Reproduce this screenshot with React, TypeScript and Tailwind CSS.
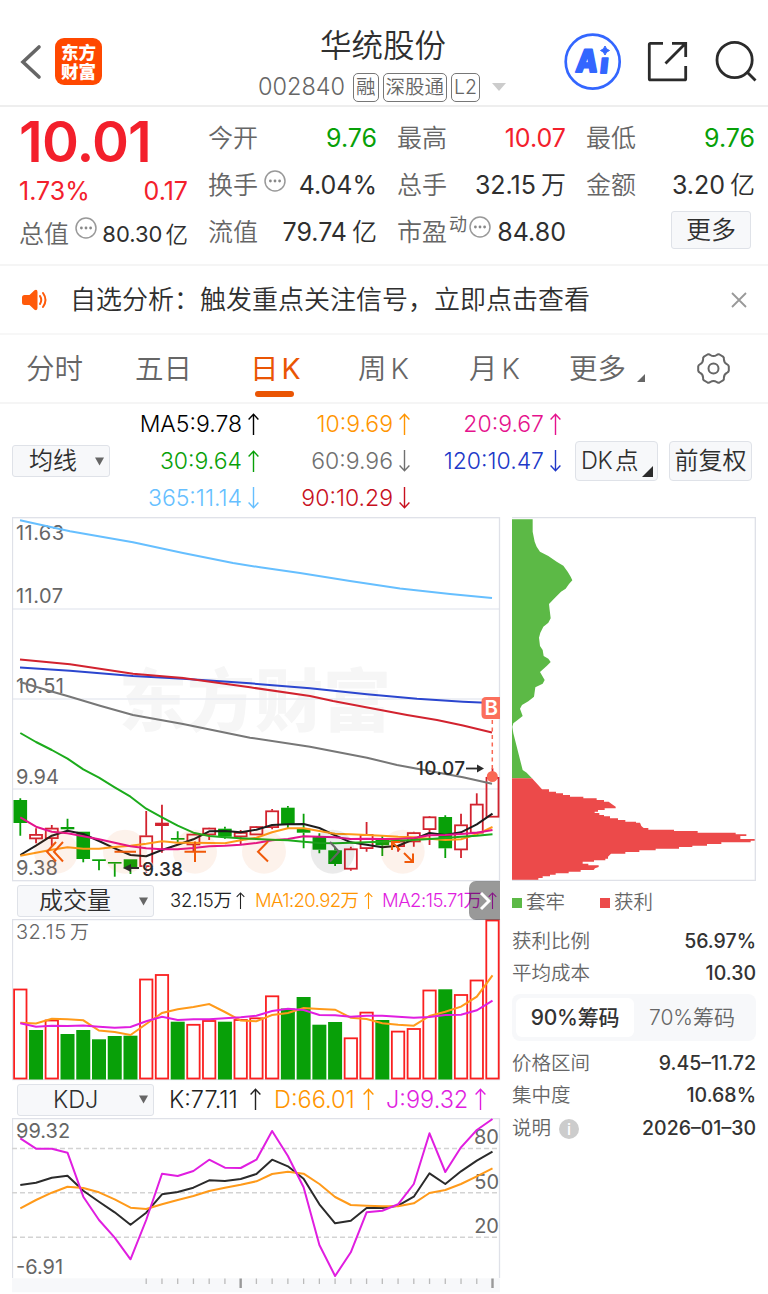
import type { ReactNode } from 'react';

// Horizontal position of the n-th trading day, shared by all three charts
const dayX = (i: number) => 20.3 + i * 15.74;

const toPoints = (ys: number[], scale = 1) =>
  ys.map((y, i) => `${dayX(i).toFixed(1)},${(y * scale).toFixed(1)}`).join(' ');

type Candle = [up: number, high: number, top: number, bottom: number, low: number];

const candles: Candle[] = [
  [0, 798.3, 800, 823, 835.7],
  [1, 828.3, 834.3, 839, 843.3],
  [1, 825, 828, 838.7, 846],
  [0, 818.7, 827, 829.3, 831.7],
  [0, 831.7, 831.7, 859, 862.3],
  [0, 859.3, 859.3, 861, 870.3],
  [0, 862, 862, 863.4, 876.7],
  [0, 859.3, 859.3, 868.3, 874],
  [1, 811, 835.7, 866.7, 873],
  [1, 804.7, 823, 825.7, 852.7],
  [0, 831.3, 838, 839.7, 842],
  [1, 834, 834, 845, 851],
  [1, 827.7, 828, 835, 840],
  [0, 826.7, 828.7, 836.7, 838.7],
  [1, 830, 832.3, 837, 844.7],
  [1, 826, 826.5, 835, 835],
  [1, 809, 810.7, 827.7, 829.3],
  [0, 806, 807.7, 824, 828.3],
  [0, 813.7, 828.7, 832.7, 848.3],
  [0, 833.3, 836.7, 849.7, 853.3],
  [0, 846.7, 850.3, 864, 866],
  [1, 846.7, 848.7, 869.3, 870.7],
  [1, 822, 834.3, 848.7, 851.7],
  [0, 836, 838, 845.3, 856],
  [1, 840, 841, 846.7, 851.7],
  [1, 831.7, 832.5, 842, 846.7],
  [1, 816, 816.7, 829.7, 845],
  [0, 815.3, 817, 848.3, 858],
  [1, 813.7, 824.7, 850, 858],
  [1, 793.3, 804, 833.3, 833.3],
  [1, 768.3, 777.3, 817.3, 817.3],
];

const ma5 = [855, 845.7, 835.7, 830.7, 834, 841, 848.3, 855, 856.3, 850, 844.7, 839.3, 831.3, 831, 832.3, 829.7, 825, 824.3, 824, 828, 835.3, 842.3, 844.7, 847.3, 845.7, 839.3, 833, 835, 832.3, 824.3, 813.7];
const ma10 = [855.7, 852.7, 849.7, 847.3, 848.7, 848.7, 847, 845.7, 843.7, 841.3, 842.7, 842.7, 843, 843.3, 840.3, 837.7, 832.3, 828.3, 828.3, 831, 833.7, 834.3, 835, 835.7, 836.7, 837.3, 838.7, 840, 839.3, 834.3, 827];
const ma20 = [817.3, 826.7, 831.7, 833.3, 836.3, 839.3, 842.7, 846.3, 848.3, 849.3, 849.3, 848, 846.3, 845.7, 844.7, 843, 840.3, 839, 836.3, 836.7, 837.3, 839, 838.7, 839, 839, 838, 835.3, 835, 834, 832.7, 830];
const ma30 = [733, 742, 750, 758.7, 769.3, 777.7, 787.3, 796.7, 808.7, 817.3, 825.7, 832.7, 836, 837.3, 838.3, 839, 839.7, 840.3, 841.7, 843, 843.3, 842.7, 842.3, 841.7, 840.7, 840, 839, 838, 836.7, 835.7, 834.3];

const volumes: [up: number, top: number][] = [
  [1, 989.5], [0, 1030], [1, 1020.5], [0, 1034], [0, 1030], [0, 1039.3], [0, 1036], [0, 1035.7],
  [1, 979.5], [1, 975], [0, 1021.7], [1, 1024.8], [1, 1021], [0, 1021.7], [1, 1020], [1, 1018.3],
  [1, 996.3], [0, 1008.5], [0, 997], [0, 1024.7], [0, 1022], [1, 1038.3], [1, 1012.6], [0, 1020],
  [1, 1031.6], [1, 1029], [1, 990.5], [0, 989.3], [1, 995], [1, 980.5], [1, 920.5],
];
const volMa1 = [1022.7, 1023.5, 1018.7, 1019.2, 1020.3, 1030.5, 1032, 1035, 1024, 1013, 1009.3, 1007, 1004, 1012, 1020.5, 1021.3, 1015, 1013, 1008, 1009, 1009.7, 1017.7, 1019, 1023.3, 1024.7, 1025.7, 1016, 1011.7, 1006.7, 996.7, 975.3];
const volMa2 = [1023.3, 1026.7, 1025.7, 1026, 1025.5, 1026.7, 1027.7, 1027, 1021.3, 1016.7, 1020, 1019.3, 1019.3, 1018.3, 1017.3, 1015.7, 1011, 1008.7, 1010, 1015, 1015.3, 1016.7, 1015.7, 1015.7, 1016.7, 1017.7, 1017, 1015, 1014.7, 1010.3, 1000.7];

const kLine = [315, 308, 293, 287, 332, 365, 397, 434, 398, 343, 336, 323, 301, 303, 297, 282, 239, 259, 296, 373, 430, 422, 384, 384, 377, 350, 280, 312, 274, 242, 215];
const dLine = [385, 360, 338, 320, 324, 337, 358, 383, 387, 373, 360, 348, 333, 323, 314, 304, 282, 275, 281, 312, 351, 375, 377, 379, 379, 370, 339, 330, 312, 289, 265];
const jLine = [175, 206, 206, 218, 350, 420, 473, 538, 420, 281, 288, 273, 239, 263, 264, 239, 153, 228, 322, 495, 588, 517, 397, 392, 373, 312, 160, 276, 202, 150, 117];

const Dots = () => (
  <svg className="w-[22px] h-[22px] shrink-0" viewBox="0 0 22 22">
    <circle cx="11" cy="11" r="10" fill="none" stroke="#999" strokeWidth="1.5" />
    <circle cx="6.4" cy="11" r="1.4" fill="#888" />
    <circle cx="11" cy="11" r="1.4" fill="#888" />
    <circle cx="15.6" cy="11" r="1.4" fill="#888" />
  </svg>
);

const Arrow = ({ down = false, small = false }: { down?: boolean; small?: boolean }) => (
  <svg
    className={`${small ? 'w-[9px] h-[17px] mb-px' : 'w-[11px] h-[22px] mb-[2px]'} shrink-0 ${down ? 'rotate-180' : ''}`}
    viewBox="0 0 11 22"
    fill="none"
    stroke="currentColor"
    strokeWidth="1.4"
  >
    <path d="M5.5 22V1.2M0.6 6.4L5.5 1.2L10.4 6.4" />
  </svg>
);

const Caret = () => (
  <svg className="w-[9px] h-[9px]" viewBox="0 0 9 9">
    <path d="M0 0.5H9L4.5 8.5Z" fill="#666" />
  </svg>
);

const Corner = ({ className }: { className: string }) => (
  <svg className={className} viewBox="0 0 10 10">
    <path d="M10 0V10H0Z" fill="currentColor" />
  </svg>
);

const Tag = ({ children }: { children: ReactNode }) => (
  <span className="h-[29px] px-[2px] pt-px flex items-center border-[1.5px] border-[#777] rounded-[5px] text-[19.5px] font-[350] text-[#666]">
    {children}
  </span>
);

type StatProps = { label: ReactNode; value: string; unit?: string; color?: string; icon?: ReactNode };

const Stat = ({ label, value, unit, color = 'text-[#2f2f2f]', icon }: StatProps) => (
  <div className="h-[47px] flex items-center text-[25px]">
    <span className="text-[#666] font-[350]">{label}</span>
    {icon}
    <span className={`ml-auto ${color}`}>{value}</span>
    {unit && <span className={`ml-[5px] font-[350] ${color}`}>{unit}</span>}
  </div>
);

const Legend = ({ text, color, down }: { text: string; color: string; down?: boolean }) => (
  <div className={`h-[37px] flex items-center justify-end gap-[6px] ${color}`}>
    <span>{text}</span>
    <Arrow down={down} />
  </div>
);

const Row = ({ label, value, icon }: { label: string; value: string; icon?: ReactNode }) => (
  <div className="h-8 flex items-center text-[19.5px]">
    <span className="text-[#666] font-[350]">{label}</span>
    {icon}
    <span className="ml-auto text-[#333] font-medium">{value}</span>
  </div>
);

const Header = () => (
  <header className="h-[107px] border-b-2 border-[#eee] flex">
    <div className="w-[258px] flex items-start pt-[38px] pl-[20px]">
      <svg className="w-[22px] h-[48px] mr-[13px]" viewBox="0 0 22 48" fill="none">
        <path d="M19 9L3 24L19 39" stroke="#666" strokeWidth="3.6" strokeLinecap="round" />
      </svg>
      <div className="w-[47px] h-[47px] rounded-[9px] bg-[#ff4800] text-white text-[17.5px] font-black leading-[19px] flex flex-col items-center justify-center">
        <span>东方</span>
        <span>财富</span>
      </div>
    </div>
    <div className="w-[250px] pt-[26px]">
      <h1 className="h-10 flex items-center pl-[62px] text-[31.5px] text-[#2f2f2f] font-[350]">华统股份</h1>
      <div className="h-[42px] flex items-center gap-1">
        <span className="w-[91px] text-[23.5px] text-[#666] font-[350]">002840</span>
        <Tag>融</Tag>
        <Tag>深股通</Tag>
        <Tag>L2</Tag>
        <svg className="ml-2 w-[14px] h-[8px]" viewBox="0 0 14 8">
          <path d="M0 0H14L7 8Z" fill="#ccc" />
        </svg>
      </div>
    </div>
    <svg className="w-[260px] h-[104px]" viewBox="508 0 260 104" fill="none">
      <circle cx="592.7" cy="61.7" r="27" stroke="#3366ff" strokeWidth="2.7" />
      <g fill="#3366ff" stroke="#3366ff" strokeWidth="1.8" strokeLinejoin="round" className="font-black" fontSize="31">
        <text transform="translate(575 71.5) skewX(-6)" textLength="22" lengthAdjust="spacingAndGlyphs">A</text>
        <text transform="translate(599.5 72.500) skewX(-6)" fontSize="27">ı</text>
      </g>
      <path d="M605 46Q606 49.5 609.500 50.500Q606 51.500 605 55Q604 51.500 600.500 50.500Q604 49.500 605 46Z" fill="#3366ff" stroke="#3366ff" />
      <g stroke="#2b2b2b" strokeWidth="2.800">
        <path d="M663 43.300H650.500Q649.300 43.300 649.300 44.500V78.700Q649.300 79.900 650.500 79.900H684.500Q685.700 79.900 685.700 78.700V66" />
        <path d="M672 43.300H685.700V57M685.400 43.600L665.500 63.500" />
        <circle cx="734.600" cy="60" r="17.600" />
        <path d="M746.500 71.500L755.500 80.500" />
      </g>
    </svg>
  </header>
);

const Quote = () => (
  <section className="h-[159px] border-b-2 border-[#f5f5f5] pl-[19px] pr-[13px] pt-[8px] grid grid-cols-4 gap-x-5">
    <div>
      <div className="h-[54px] flex items-center text-[56px] font-semibold text-[#f3202c] tracking-[-0.8px]">10.01</div>
      <div className="h-[46px] flex items-center justify-between text-[25px] text-[#f3202c]">
        <span>1.73%</span>
        <span>0.17</span>
      </div>
      <div className="h-[39px] flex items-center text-[#2f2f2f]">
        <span className="text-[25px] font-[350] text-[#666]">总值</span>
        <span className="ml-[6px] mb-[13px]"><Dots /></span>
        <span className="ml-auto text-[22px]">80.30</span>
        <span className="ml-[3px] text-[22.5px] font-[350]">亿</span>
      </div>
    </div>
    <div>
      <Stat label="今开" value="9.76" color="text-[#08a008]" />
      <Stat label="换手" value="4.04%" icon={<span className="ml-[6px] mb-[10px]"><Dots /></span>} />
      <Stat label="流值" value="79.74" unit="亿" />
    </div>
    <div>
      <Stat label="最高" value="10.07" color="text-[#f3202c]" />
      <Stat label="总手" value="32.15" unit="万" />
      <Stat
        label="市盈"
        value="84.80"
        icon={
          <span className="flex items-start mb-[12px] text-[18px] leading-[18px] text-[#666] ml-[2px] gap-[2px]">
            动<Dots />
          </span>
        }
      />
    </div>
    <div>
      <Stat label="最低" value="9.76" color="text-[#08a008]" />
      <Stat label="金额" value="3.20" unit="亿" />
      <div className="ml-auto mr-1 mt-[2px] pt-px w-[80px] h-[38px] flex items-center justify-center rounded-[3px] border-[1.5px] border-[#dfe2e8] bg-[#f7f8fa] text-[25px] font-[350] text-[#2f2f2f]">
        更多
      </div>
    </div>
  </section>
);

const Notice = () => (
  <section className="h-[69px] border-b-2 border-[#f7f7f7] flex items-center">
    <svg className="ml-[22px] w-[26px] h-[22px]" viewBox="0 0 26 22" fill="none">
      <path d="M2.500 6H7.500L12.500 1.200Q15.500 0 15.500 3V19Q15.500 22 12.500 20.800L7.500 16H2.500Q0 16 0 13.500V8.500Q0 6 2.500 6Z" fill="#ff5a0a" />
      <path d="M18 7Q20.500 11 18 15M21 4Q26 11 21 18" stroke="#ff5a0a" strokeWidth="2" strokeLinecap="round" />
    </svg>
    <span className="ml-[22px] text-[26px] font-[350] text-[#2f2f2f]">自选分析：触发重点关注信号，立即点击查看</span>
    <svg className="ml-auto mr-[21px] w-4 h-4" viewBox="0 0 16 16" fill="none">
      <path d="M1 1L15 15M15 1L1 15" stroke="#999" strokeWidth="1.800" />
    </svg>
  </section>
);

const Tabs = () => (
  <nav className="h-[69px] border-b-2 border-[#f5f5f5] pl-[26px] flex text-[28.5px] text-[#666] font-[350] leading-[67px]">
    <span className="w-[109px]">分时</span>
    <span className="w-[115px]">五日</span>
    <span className="w-[108px] text-[#ea5504] font-normal flex gap-[3px] relative">
      <span>日</span><span>K</span>
      <i className="absolute left-[5px] bottom-[5px] w-[39px] h-[6px] rounded-full bg-[#ea5504]" />
    </span>
    <span className="w-[111px] flex gap-[4px]"><span>周</span><span>K</span></span>
    <span className="w-[100px] flex gap-[4px]"><span>月</span><span>K</span></span>
    <span className="w-[68px]">更多</span>
    <Corner className="w-[8px] h-[8px] mt-[39px] text-[#666]" />
    <svg className="ml-[52px] mt-[17px] w-[33px] h-[33px]" viewBox="0 0 33 33" fill="none" stroke="#666" strokeWidth="2">
      <path
        d="M10.500 2.500Q12 1.800 13.300 3Q16.500 5.200 19.700 3Q21 1.800 22.500 2.500L26 4.600Q27.200 5.500 26.900 7.200Q27 10.900 30.200 12.300Q31.600 13 31.800 14.500V18.500Q31.600 20 30.200 20.700Q27 22.100 26.900 25.800Q27.200 27.500 26 28.400L22.500 30.500Q21 31.200 19.700 30Q16.500 27.800 13.300 30Q12 31.200 10.500 30.500L7 28.400Q5.800 27.500 6.100 25.800Q6 22.100 2.800 20.700Q1.400 20 1.200 18.500V14.500Q1.400 13 2.800 12.300Q6 10.900 6.100 7.200Q5.800 5.500 7 4.600Z"
        strokeLinejoin="round"
      />
      <circle cx="16.500" cy="16.500" r="5" />
    </svg>
  </nav>
);

const Averages = () => (
  <section className="h-[113px] pl-3 flex">
    <div className="mt-[41px] w-[98px] h-[32px] rounded-[3px] border-[1.5px] border-[#dfe2e8] bg-[#f7f8fa] flex items-center justify-between pl-4 pr-[5px] text-[24px] font-[350] text-[#2f2f2f]">
      均线
      <Caret />
    </div>
    <div className="w-[149px] pt-[2px] text-[23px] font-[350]">
      <Legend text="MA5:9.78" color="text-black" />
      <Legend text="30:9.64" color="text-[#08a008]" />
      <Legend text="365:11.14" color="text-[#66bfff]" down />
    </div>
    <div className="w-[151px] pt-[2px] text-[23px] font-[350]">
      <Legend text="10:9.69" color="text-[#ff9500]" />
      <Legend text="60:9.96" color="text-[#707070]" down />
      <Legend text="90:10.29" color="text-[#c8101e]" down />
    </div>
    <div className="w-[151px] pt-[2px] text-[23px] font-[350]">
      <Legend text="20:9.67" color="text-[#e5128d]" />
      <Legend text="120:10.47" color="text-[#2038c8]" down />
    </div>
    <div className="ml-[14px] mt-[37px] relative w-[83px] h-[40px] rounded-[4px] border-[1.5px] border-[#dfe2e8] bg-[#f7f8fa] flex items-center gap-[3px] pl-[5px] text-[23.5px] font-[350] text-[#2f2f2f]">
      <span className="tracking-[-0.5px]">DK</span>点
      <Corner className="absolute right-[4px] bottom-[3px] w-[11px] h-[11px] text-[#2b2b2b]" />
    </div>
    <div className="ml-[11px] mt-[37px] w-[83px] h-[40px] rounded-[4px] border-[1.5px] border-[#dfe2e8] bg-[#f7f8fa] flex items-center justify-center text-[24px] font-[350] text-[#2f2f2f]">
      前复权
    </div>
  </section>
);

const PriceChart = () => (
  <svg className="block w-[489px] h-[365px]" viewBox="12 517 489 365" fill="none">
    <text x="119" y="726" fontSize="68" fill="#f6f6f6" className="font-black">东方财富</text>
    <path d="M12 609H500M12 699H500M12 789H500" stroke="#e9ebf2" strokeWidth="1.500" />
    <rect x="12.500" y="517.700" width="487" height="363" stroke="#dfe1e8" strokeWidth="1.300" />

    <g fontSize="20" fill="#666">
      <text x="16" y="540" textLength="48">11.63</text>
      <text x="16" y="602.500" textLength="47">11.07</text>
      <text x="16" y="693" textLength="48">10.51</text>
      <text x="16" y="783.500">9.94</text>
      <text x="16" y="874.500">9.38</text>
    </g>

    <g strokeWidth="1.800">
      {candles.map(([up, high, top, bottom, low], i) => {
        const x = dayX(i);
        const color = up ? '#d2232f' : '#08a008';
        return (
          <g key={i} stroke={color}>
            <path d={`M${x} ${high}V${top}M${x} ${bottom}V${low}`} />
            {up ? (
              <rect x={x - 6} y={top + 0.6} width="12" height={Math.max(bottom - top - 1.2, 1)} />
            ) : (
              <rect x={x - 6.8} y={top} width="13.6" height={Math.max(bottom - top, 1.6)} fill={color} stroke="none" />
            )}
          </g>
        );
      })}
    </g>

    <g strokeWidth="2" strokeLinejoin="round">
      <polyline points="20,520.300 70,531.300 133,542.300 183,553 233,563 260,567.300 300,573 350,581 400,588.500 450,594 492,598" stroke="#66bfff" />
      <polyline points="20,667.500 70,670.700 133,676 183,678.800 250,683.300 310,688.300 367,694.300 417,698.700 463,701.700 492,703" stroke="#2b46cf" />
      <polyline points="20,659.500 70,664.300 133,673.700 183,678 250,687.300 310,696 333,701 407,715 437,720 463,725.500 492,732.500" stroke="#d2232f" />
      <polyline points="20,682 50,691 70,696.700 100,705.700 133,715 183,724 250,737.700 310,746.700 367,757.700 397,765 420,769.300 463,777.300 492,783.700" stroke="#777" />
      <polyline points={toPoints(ma5)} stroke="#1d1d1d" />
      <polyline points={toPoints(ma10)} stroke="#ff9a1a" />
      <polyline points={toPoints(ma20)} stroke="#e5128d" />
      <polyline points={toPoints(ma30)} stroke="#1cab1c" />
    </g>

    {/* pan and zoom buttons over the candles */}
    <g fill="#ea5504" fillOpacity="0.080">
      <circle cx="56" cy="851.700" r="22" />
      <circle cx="125" cy="851.700" r="22" />
      <circle cx="195" cy="851.700" r="22" />
      <circle cx="264" cy="851.700" r="22" />
      <circle cx="402.700" cy="851.700" r="22" />
    </g>
    <circle cx="332.700" cy="851.700" r="22" fill="#000" fillOpacity="0.080" />
    <g stroke="#f05a0a" strokeWidth="2">
      <path d="M56 842L47 851.700L56 861.500M63 842L54 851.700L63 861.500" />
      <path d="M114.500 851.700H136M184.500 851.700H206M195 841.500V862" />
      <path d="M268 841.500L258 851.700L268 861.500" />
      <path d="M400 850L392.500 842.500M392 850V842H400M404 853L412.500 861.500M413 853.500V862H404.500" />
    </g>
    <path d="M330 842L339 851.700L330 861.500" stroke="#666" strokeWidth="2" />

    <g fontSize="19" fill="#2b2b2b" className="font-medium">
      <text x="142" y="875.500" textLength="41" stroke="#fff" strokeOpacity="0.600" strokeWidth="2" paintOrder="stroke">9.38</text>
      <text x="416" y="775" textLength="49">10.07</text>
      <path d="M139 868H128" stroke="#2b2b2b" strokeWidth="2" />
      <path d="M123 868L131 864V872Z" />
      <path d="M466 768.500H480" stroke="#2b2b2b" strokeWidth="1.800" />
      <path d="M484 768.500L477 764.500V772.500Z" />
    </g>

    <path d="M492.300 720V770" stroke="#f96854" strokeWidth="1.500" strokeDasharray="4 3.500" />
    <circle cx="492.300" cy="776.500" r="5.500" fill="#f96854" />
    <path d="M500 697H486Q481.500 697 481.500 701.500V714.500Q481.500 719 486 719H500Z" fill="#fb6f5c" />
    <text x="484.500" y="715.300" fontSize="20.500" fill="#fff" className="font-semibold">B</text>
  </svg>
);

const VolumeHeader = () => (
  <div className="h-[37px] relative flex items-center pl-[5px] text-[18.5px] font-[350]">
    <div className="w-[137px] shrink-0 h-[32px] mt-px rounded-[3px] border-[1.5px] border-[#dfe2e8] bg-[#f7f8fa] flex items-center justify-between pl-[21px] pr-[5px] text-[24px] text-[#2f2f2f]">
      成交量
      <Caret />
    </div>
    <span className="ml-[16px] w-[75px] shrink-0 flex items-center justify-between text-[#222] tracking-[-0.2px]">32.15万<Arrow small /></span>
    <span className="ml-[10px] w-[118px] shrink-0 flex items-center justify-between text-[#ff9500] tracking-[-0.6px]">MA1:20.92万<Arrow small /></span>
    <span className="ml-[9px] w-[115px] shrink-0 flex items-center justify-between text-[#e01ee0] tracking-[-0.5px]">MA2:15.71万<Arrow small /></span>
    <div className="absolute right-[1px] top-[-1px] w-[31px] h-[39px] rounded-l-[7px] bg-black/40 flex items-center justify-center">
      <svg className="w-[12px] h-[20px]" viewBox="0 0 12 20" fill="none">
        <path d="M2 2L10 10L2 18" stroke="#fff" strokeWidth="3" />
      </svg>
    </div>
  </div>
);

const VolumeChart = () => (
  <svg className="block w-[489px] h-[162px]" viewBox="12 919 489 162" fill="none">
    <rect x="12.500" y="919.600" width="487" height="160" stroke="#dfe1e8" strokeWidth="1.300" />
    <text x="16" y="939.300" fontSize="20" fill="#666" className="font-[350]" textLength="50">32.15</text>
    <text x="70" y="939.300" fontSize="19" fill="#666" className="font-[350]">万</text>
    {volumes.map(([up, top], i) =>
      up ? (
        <rect key={i} x={dayX(i) - 6.2} y={top} width="12.4" height={1078.5 - top} stroke="#fa2020" strokeWidth="1.8" />
      ) : (
        <rect key={i} x={dayX(i) - 7} y={top} width="14" height={1079.5 - top} fill="#08a008" />
      ),
    )}
    <polyline points={toPoints(volMa1)} stroke="#ff9a1a" strokeWidth="2" />
    <polyline points={toPoints(volMa2)} stroke="#e01ee0" strokeWidth="2" />
  </svg>
);

const KdjHeader = () => (
  <div className="h-[37px] flex items-center pl-[5px] text-[23.5px] font-[350]">
    <div className="w-[137px] shrink-0 h-[32px] rounded-[3px] border-[1.5px] border-[#dfe2e8] bg-[#f7f8fa] flex items-center justify-between pl-[35px] pr-[5px] text-[23.5px] text-[#2f2f2f]">
      KDJ
      <Caret />
    </div>
    <span className="ml-[15px] w-[92px] pt-px flex items-center justify-between text-[#222]">K:77.11<Arrow /></span>
    <span className="ml-[13px] w-[100px] pt-px flex items-center justify-between text-[#ff9500]">D:66.01<Arrow /></span>
    <span className="ml-[12px] w-[100px] pt-px flex items-center justify-between text-[#e01ee0]">J:99.32<Arrow /></span>
  </div>
);

const KdjChart = () => (
  <svg className="block w-[489px] h-[176px]" viewBox="12 38 489 176" fill="none">
    <rect x="12" y="198.300" width="488" height="14" fill="#f7f8fa" />
    <path d="M12.500 198V38.600H499.500V198" stroke="#dfe1e8" strokeWidth="1.300" />
    <path d="M12 68.500H500M12 112.800H500M12 157.300H500" stroke="#d3d3d3" strokeWidth="1.600" strokeDasharray="5 3" />
    <g fontSize="20" fill="#666">
      <text x="16" y="58">99.32</text>
      <text x="16" y="194">-6.91</text>
      <g textAnchor="end">
        <text x="499" y="64">80</text>
        <text x="499" y="108.500">50</text>
        <text x="499" y="153">20</text>
      </g>
    </g>
    <g strokeWidth="2" strokeLinejoin="round">
      <polyline points={toPoints(kLine, 1 / 3)} stroke="#2b2b2b" />
      <polyline points={toPoints(dLine, 1 / 3)} stroke="#ff9a1a" />
      <polyline points={toPoints(jLine, 1 / 3)} stroke="#e01ee0" />
    </g>
    {candles.map((_, i) =>
      i < 8 ? null : i === 14 || i === 30 ? (
        <path key={i} d={`M${dayX(i)} 198.500V208`} stroke="#999" strokeWidth="2.4" />
      ) : (
        <path key={i} d={`M${dayX(i)} 198.500V204`} stroke="#bbb" strokeWidth="1.3" />
      ),
    )}
  </svg>
);

// Holdings by cost: trapped chips above the current price, profitable ones below
const ChipChart = () => (
  <svg className="block w-[244px] h-[364px]" viewBox="36 21 732 1092">
    <path
      d="M36 28H98V65L104 95L110 110L120 125L145 138L170 155L190 167L203 185L212 200L217 211L207 222L197 236L183 245L165 263L147 282L149 300L152 325L145 338L130 350L121 368L117 383L120 408L128 420L131 438L145 446L152 456L140 468L120 486L134 510L128 521L106 532L102 560L85 574L66 585L60 596L68 618L50 632L40 640L37 650L40 670L68 780L80 788L96 805H36Z"
      fill="#5cb946"
    />
    <path
      d="M36 805H96L126 838H147V845H168V850H189V855H210V860H250V865H290V870H312V875H326L335 882L347 890V895H314V900H294V905H284V909H298V915H312V919H330V925H354V930H376V935H408V938H420L424 948L431 954H445V959H522V963H593V968H707V973H739V978H721V987H765V992H752V997H664V1002H621V1007H577V1011H537V1016H467V1021H418V1026H376V1031H333L324 1040V1046H316V1051H282V1055H248V1061H265V1066H296V1071L285 1075L281 1080H242V1085H206V1090H167V1094H150V1099H128V1104H115V1110H36Z"
      fill="#ec4a4a"
    />
    <path d="M36 23H766V1111H36" fill="none" stroke="#dfe1e8" strokeWidth="4" />
  </svg>
);

const ChipPanel = () => (
  <aside className="w-[244px] ml-[11px]">
    <ChipChart />
    <div className="h-[44px] flex items-center text-[19.5px] text-[#666] font-[350]">
      <i className="w-[10px] h-[10px] bg-[#5cb946] mr-1" />
      <span className="w-[74px]">套牢</span>
      <i className="w-[10px] h-[10px] bg-[#ec4a4a] mr-1" />
      <span>获利</span>
    </div>
    <div className="pt-px">
      <Row label="获利比例" value="56.97%" />
      <Row label="平均成本" value="10.30" />
    </div>
    <div className="mt-[4px] mb-[7px] h-[47px] rounded-lg bg-[#f7f8fa] p-[4px] flex text-[21px] leading-[40px] text-center">
      <span className="w-[118px] rounded-[6px] bg-white text-[#333] font-medium tracking-[-0.2px]">90%筹码</span>
      <span className="w-[118px] pr-[2px] text-[#666] font-[350]">70%筹码</span>
    </div>
    <Row label="价格区间" value="9.45–11.72" />
    <Row label="集中度" value="10.68%" />
    <div className="mt-px">
      <Row
        label="说明"
        value="2026–01–30"
        icon={
          <span className="ml-[8px] w-[20px] h-[20px] rounded-full bg-[#ccc] text-white text-[16px] leading-[20px] font-medium text-center">
            i
          </span>
        }
      />
    </div>
  </aside>
);

export default function App() {
  return (
    <div className="w-[768px] h-[1294px] overflow-hidden bg-white whitespace-nowrap font-[Inter,'Noto_Sans_CJK_SC',sans-serif]">
      <Header />
      <Quote />
      <Notice />
      <Tabs />
      <Averages />
      <main className="flex pl-3">
        <div className="w-[489px]">
          <PriceChart />
          <VolumeHeader />
          <VolumeChart />
          <KdjHeader />
          <KdjChart />
        </div>
        <ChipPanel />
      </main>
    </div>
  );
}
